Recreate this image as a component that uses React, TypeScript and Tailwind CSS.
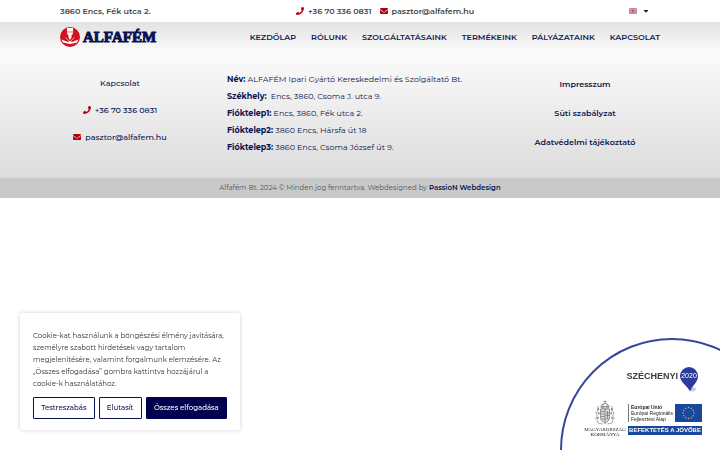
import type { ReactNode } from 'react';
import { FaCaretDown, FaEnvelope, FaPhone } from 'react-icons/fa';

interface ICompanyRow {
  label: string;
  value: string;
}

const navItems: string[] = [
  'Kezdőlap',
  'Rólunk',
  'Szolgáltatásaink',
  'Termékeink',
  'Pályázataink',
  'Kapcsolat',
];

const companyRows: ICompanyRow[] = [
  { label: 'Név:', value: 'ALFAFÉM Ipari Gyártó Kereskedelmi és Szolgáltató Bt.' },
  { label: 'Székhely:', value: '\u00a0Encs, 3860, Csoma J. utca 9.' },
  { label: 'Fióktelep1:', value: 'Encs, 3860, Fék utca 2.' },
  { label: 'Fióktelep2:', value: '3860 Encs, Hársfa út 18' },
  { label: 'Fióktelep3:', value: '3860 Encs, Csoma József út 9.' },
];

const legalLinks: string[] = ['Impresszum', 'Süti szabályzat', 'Adatvédelmi tájékoztató'];

const ContactLink = ({ href, icon, children }: { href: string; icon: ReactNode; children: ReactNode }) => (
  <a href={href} className="flex items-center gap-1 whitespace-nowrap">
    <span className="text-[#b0000c]">{icon}</span>
    {children}
  </a>
);

const UkFlag = () => (
  <svg viewBox="0 0 16 11" className="h-[6px] w-2">
    <rect width="16" height="11" fill="#6d6a9c" />
    <path d="M0 0l16 11M16 0L0 11" stroke="#f3dfe4" strokeWidth="2.4" />
    <path d="M0 0l16 11M16 0L0 11" stroke="#d0324a" strokeWidth="1" />
    <path d="M8 0v11M0 5.5h16" stroke="#f3dfe4" strokeWidth="4" />
    <path d="M8 0v11M0 5.5h16" stroke="#d0324a" strokeWidth="2.4" />
  </svg>
);

const TopBar = () => (
  <div className="grid h-[22px] grid-cols-[236px_1fr_auto] items-center bg-white px-15 text-[8px] font-semibold text-[#444]">
    <span>3860 Encs, Fék utca 2.</span>
    <div className="flex items-center gap-2">
      <ContactLink href="tel:+36703360831" icon={<FaPhone />}>
        +36 70 336 0831
      </ContactLink>
      <ContactLink href="mailto:pasztor@alfafem.hu" icon={<FaEnvelope />}>
        pasztor@alfafem.hu
      </ContactLink>
    </div>
    <button type="button" aria-label="English" className="mr-[10px] flex items-center gap-[5px]">
      <UkFlag />
      <FaCaretDown className="size-2 text-[#222]" />
    </button>
  </div>
);

const Logo = () => (
  <a href="#" className="flex items-center gap-[3px]">
    <svg viewBox="0 0 40 40" className="size-5">
      <circle cx="20" cy="20" r="20" fill="#d3121d" />
      <path d="M14 2h12v11l-3 4v4l-3 5-3-5v-4l-3-4z" fill="#fff" />
      <path d="M14 10h12" stroke="#d3121d" strokeWidth="1.2" />
      <path d="M3 25l13 5 4-2 4 2 13-5-3 6-14 3-14-3z" fill="#fff" />
      <path d="M20 30L11 21M20 30l9-9" stroke="#fff" strokeWidth="1.2" />
    </svg>
    <span className="font-['Liberation_Serif',serif] text-[15px] leading-5 font-bold text-[#0a1250] [-webkit-text-stroke:1px_#0a1250]">
      ALFAFÉM
    </span>
  </a>
);

const Header = () => (
  <header className="flex h-[30px] items-center justify-between bg-linear-to-b from-[#e2e2e2] to-[#fbfbfb] px-15">
    <Logo />
    <nav className="flex gap-[15px] text-[8px] font-semibold text-[#141b4d] uppercase">
      {navItems.map((item) => (
        <a key={item} href="#">
          {item}
        </a>
      ))}
    </nav>
  </header>
);

const Footer = () => (
  <footer className="text-[8px] text-[#0b1350]">
    <div className="grid h-[126px] grid-cols-[4fr_11fr_5fr] bg-linear-to-b from-[#fbfbfb] to-[#dcdcdc] px-15 pt-[19px]">
      <div className="flex flex-col items-center gap-[15px] pt-1.5 leading-3 font-medium">
        <p>Kapcsolat</p>
        <ContactLink href="tel:+36703360831" icon={<FaPhone />}>
          +36 70 336 0831
        </ContactLink>
        <ContactLink href="mailto:pasztor@alfafem.hu" icon={<FaEnvelope />}>
          pasztor@alfafem.hu
        </ContactLink>
      </div>
      <div className="pl-[47px] leading-[17px] whitespace-nowrap">
        {companyRows.map(({ label, value }) => (
          <p key={label}>
            <strong className="font-bold">{label}</strong> {value}
          </p>
        ))}
      </div>
      <div className="flex flex-col items-center gap-[17px] pt-[7px] leading-3 font-semibold">
        {legalLinks.map((link) => (
          <a key={link} href="#">
            {link}
          </a>
        ))}
      </div>
    </div>
    <p className="bg-[#c9c9c9] text-center text-[7px] leading-5 text-[#555]">
      Alfafém Bt. 2024 © Minden jog fenntartva. Webdesigned by{' '}
      <a href="#" className="font-semibold text-[#0b1350]">
        PassioN Webdesign
      </a>
    </p>
  </footer>
);

const CookieBanner = () => (
  <section className="fixed bottom-5 left-5 w-[220px] rounded-xs bg-white px-[13px] pt-[17px] pb-[11px] shadow-[0_0_4px_rgba(0,0,0,0.18)]">
    <p className="text-[7px] leading-3 text-[#333]">
      Cookie-kat használunk a böngészési élmény javítására, személyre szabott hirdetések vagy
      tartalom megjelenítésére, valamint forgalmunk elemzésére. Az „Összes elfogadása” gombra
      kattintva hozzájárul a cookie-k használatához.
    </p>
    <div className="mt-[7px] flex gap-1 text-[7px] font-medium whitespace-nowrap text-[#0b1350]">
      <button type="button" className="h-[22px] grow rounded-[1px] border border-[#0b1350]">
        Testreszabás
      </button>
      <button type="button" className="h-[22px] grow rounded-[1px] border border-[#0b1350]">
        Elutasít
      </button>
      <button
        type="button"
        className="h-[22px] grow rounded-[1px] border border-[#00004f] bg-[#00004f] text-white"
      >
        Összes elfogadása
      </button>
    </div>
  </section>
);

const Pin = () => (
  <svg viewBox="0 0 36 50" className="h-[25px] w-[18px]">
    <path d="M24 40l9 3-5 6-9-1z" fill="#c3c7e4" />
    <path d="M18 0a18 18 0 0 1 18 18c0 13-12 19-16 31C15 37 0 31 0 18A18 18 0 0 1 18 0z" fill="#2b3d9b" />
  </svg>
);

const CoatOfArms = () => (
  <svg viewBox="0 0 40 50" className="h-[25px] w-5" fill="none" stroke="#777" strokeWidth="1.5">
    <path d="M12 16c0-6 3-9 8-9s8 3 8 9zM20 7V1M17 3h6M12 13h16M16 8v8M24 8v8" />
    <path d="M11 18h18v17c0 6-5 9-9 12-4-3-9-6-9-12z" fill="#ddd" />
    <path d="M20 18v28M11 23h9M11 28h9M11 33h9M12 38h8M25 22v16M22 26h6M21 31h8M21 39q4-4 7 0" />
    <path d="M8 12c-6 4 1 7-4 11s3 7-1 11 4 6 2 9 6 4 10 5M32 12c6 4-1 7 4 11s-3 7 1 11-4 6-2 9-6 4-10 5" />
    <path d="M8 17l-3 3M6 25l3 3M7 34l-2 4M32 17l3 3M34 25l-3 3M33 34l2 4" strokeWidth="2.5" />
  </svg>
);

const EuFlag = () => (
  <svg viewBox="0 0 54 36" className="h-[18px] w-[27px]">
    <rect width="54" height="36" fill="#17479e" />
    {Array.from({ length: 12 }, (_, i) => {
      const angle = (i * Math.PI) / 6;
      return (
        <path
          key={i}
          transform={`translate(${27 + 11 * Math.sin(angle)} ${18 - 11 * Math.cos(angle)})`}
          d="M0-2l.5 1.3h1.4L.8.3l.4 1.4L0 .8l-1.2.9.4-1.4-1.1-1h1.4z"
          fill="#f5e13c"
        />
      );
    })}
  </svg>
);

const SzechenyiBadge = () => (
  <a
    href="#"
    className="fixed right-0 bottom-0 block h-28 w-40 overflow-hidden font-['Liberation_Sans',sans-serif]"
  >
    <div className="h-56 w-56 rounded-full border-2 border-[#37479b] bg-white pt-[27px] pl-6">
      <div className="flex w-[112px] items-center justify-end gap-[2px]">
        <span className="pb-1.5 text-[9px] font-bold text-[#3c3c40]">SZÉCHENYI</span>
        <span className="relative">
          <Pin />
          <span className="absolute inset-x-0 top-1 text-center text-[7px] leading-[10px] text-white">
            2020
          </span>
        </span>
      </div>
      <div className="mt-2 flex gap-1">
        <div className="flex w-[38px] flex-col items-center text-center font-['Liberation_Serif',serif] text-[5px] leading-[5px] whitespace-nowrap text-[#222]">
          <CoatOfArms />
          <span className="mt-[2px]">MAGYARORSZÁG</span>
          <span>KORMÁNYA</span>
        </div>
        <div className="mt-1 w-[74px]">
          <div className="flex items-center justify-between">
            <p className="border-l border-[#777] pl-[2px] text-[5px] leading-[6px] whitespace-nowrap text-[#222]">
              <strong>Európai Unió</strong>
              <br />
              Európai Regionális
              <br />
              Fejlesztési Alap
            </p>
            <EuFlag />
          </div>
          <p className="mt-1 bg-[#17479e] text-center text-[6px] leading-[9px] font-bold whitespace-nowrap text-white">
            BEFEKTETÉS A JÖVŐBE
          </p>
        </div>
      </div>
    </div>
  </a>
);

const App = () => {
  return (
    <div className="min-h-screen bg-white font-[Montserrat,Inter,sans-serif]">
      <TopBar />
      <Header />
      <Footer />
      <CookieBanner />
      <SzechenyiBadge />
    </div>
  );
};

export default App;
